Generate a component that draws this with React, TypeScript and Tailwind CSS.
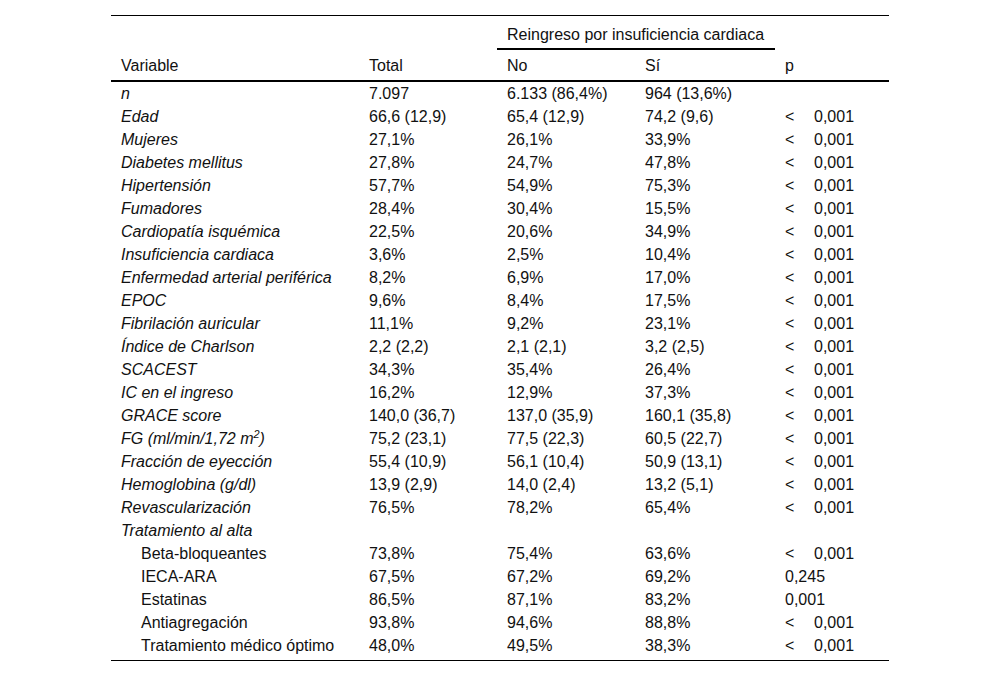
import React from "react";

type Row = {
  label: React.ReactNode;
  total: string;
  no: string;
  si: string;
  p?: string;
  lt?: boolean;
  sub?: boolean;
};

const rows: Row[] = [
  { label: "n", total: "7.097", no: "6.133 (86,4%)", si: "964 (13,6%)" },
  { label: "Edad", total: "66,6 (12,9)", no: "65,4 (12,9)", si: "74,2 (9,6)", p: "0,001", lt: true },
  { label: "Mujeres", total: "27,1%", no: "26,1%", si: "33,9%", p: "0,001", lt: true },
  { label: "Diabetes mellitus", total: "27,8%", no: "24,7%", si: "47,8%", p: "0,001", lt: true },
  { label: "Hipertensión", total: "57,7%", no: "54,9%", si: "75,3%", p: "0,001", lt: true },
  { label: "Fumadores", total: "28,4%", no: "30,4%", si: "15,5%", p: "0,001", lt: true },
  { label: "Cardiopatía isquémica", total: "22,5%", no: "20,6%", si: "34,9%", p: "0,001", lt: true },
  { label: "Insuficiencia cardiaca", total: "3,6%", no: "2,5%", si: "10,4%", p: "0,001", lt: true },
  { label: "Enfermedad arterial periférica", total: "8,2%", no: "6,9%", si: "17,0%", p: "0,001", lt: true },
  { label: "EPOC", total: "9,6%", no: "8,4%", si: "17,5%", p: "0,001", lt: true },
  { label: "Fibrilación auricular", total: "11,1%", no: "9,2%", si: "23,1%", p: "0,001", lt: true },
  { label: "Índice de Charlson", total: "2,2 (2,2)", no: "2,1 (2,1)", si: "3,2 (2,5)", p: "0,001", lt: true },
  { label: "SCACEST", total: "34,3%", no: "35,4%", si: "26,4%", p: "0,001", lt: true },
  { label: "IC en el ingreso", total: "16,2%", no: "12,9%", si: "37,3%", p: "0,001", lt: true },
  { label: "GRACE score", total: "140,0 (36,7)", no: "137,0 (35,9)", si: "160,1 (35,8)", p: "0,001", lt: true },
  {
    label: (
      <>
        FG (ml/min/1,72 m<sup className="text-[11px]">2</sup>)
      </>
    ),
    total: "75,2 (23,1)",
    no: "77,5 (22,3)",
    si: "60,5 (22,7)",
    p: "0,001",
    lt: true,
  },
  { label: "Fracción de eyección", total: "55,4 (10,9)", no: "56,1 (10,4)", si: "50,9 (13,1)", p: "0,001", lt: true },
  { label: "Hemoglobina (g/dl)", total: "13,9 (2,9)", no: "14,0 (2,4)", si: "13,2 (5,1)", p: "0,001", lt: true },
  { label: "Revascularización", total: "76,5%", no: "78,2%", si: "65,4%", p: "0,001", lt: true },
  { label: "Tratamiento al alta", total: "", no: "", si: "" },
  { label: "Beta-bloqueantes", total: "73,8%", no: "75,4%", si: "63,6%", p: "0,001", lt: true, sub: true },
  { label: "IECA-ARA", total: "67,5%", no: "67,2%", si: "69,2%", p: "0,245", sub: true },
  { label: "Estatinas", total: "86,5%", no: "87,1%", si: "83,2%", p: "0,001", sub: true },
  { label: "Antiagregación", total: "93,8%", no: "94,6%", si: "88,8%", p: "0,001", lt: true, sub: true },
  { label: "Tratamiento médico óptimo", total: "48,0%", no: "49,5%", si: "38,3%", p: "0,001", lt: true, sub: true },
];

export default function App() {
  return (
    <div
      className="w-[1000px] h-[678px] bg-white text-[#111] pt-[15px] pl-[111px]"
      style={{ fontFamily: '"Liberation Sans", Arial, sans-serif' }}
    >
      <table className="w-[778px] table-fixed border-collapse text-[16px] leading-[23px]">
        <colgroup>
          <col className="w-[248px]" />
          <col className="w-[138px]" />
          <col className="w-[138px]" />
          <col className="w-[140px]" />
          <col className="w-[114px]" />
        </colgroup>
        <thead>
          <tr className="border-t border-black h-[32px]">
            <th />
            <th />
            <th colSpan={2} className="text-left font-normal px-[10px] align-middle pt-[6px]">
              Reingreso por insuficiencia cardiaca
            </th>
            <th />
          </tr>
          <tr className="h-[2px]">
            <td className="p-0" />
            <td className="p-0" />
            <td colSpan={2} className="p-0">
              <div className="h-[2px] bg-black" />
            </td>
            <td className="p-0" />
          </tr>
          <tr className="h-[31px] border-b-2 border-black">
            <th className="text-left font-normal px-[10px] pt-[2px]">Variable</th>
            <th className="text-left font-normal px-[10px] pt-[2px]">Total</th>
            <th className="text-left font-normal px-[10px] pt-[2px]">No</th>
            <th className="text-left font-normal px-[10px] pt-[2px]">Sí</th>
            <th className="text-left font-normal px-[10px] pt-[2px]">p</th>
          </tr>
        </thead>
        <tbody className="border-b border-black">
          {rows.map((r, i) => (
            <tr key={i} className={i === rows.length - 1 ? "h-[27px] align-top" : "h-[23px] align-top"}>
              <td className={`${r.sub ? "pl-[30px]" : "pl-[10px] italic"} pr-[4px] whitespace-nowrap`}>
                {r.label}
              </td>
              <td className="px-[10px] whitespace-nowrap">{r.total}</td>
              <td className="px-[10px] whitespace-nowrap">{r.no}</td>
              <td className="px-[10px] whitespace-nowrap">{r.si}</td>
              <td className="px-[10px] whitespace-nowrap">
                {r.lt && <span className="inline-block w-[29px]">&lt;</span>}
                {r.p}
              </td>
            </tr>
          ))}
        </tbody>
      </table>
    </div>
  );
}
